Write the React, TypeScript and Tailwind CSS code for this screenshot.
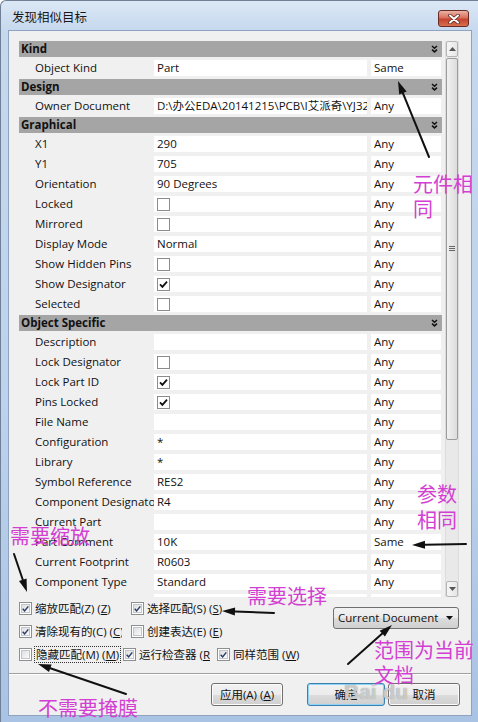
import React from 'react';

type GridRow =
  | { h: string }
  | { name: string; value?: string; check?: boolean; match?: string };

const rows: GridRow[] = [
  { h: 'Kind' },
  { name: 'Object Kind', value: 'Part', match: 'Same' },
  { h: 'Design' },
  { name: 'Owner Document', value: 'D:\\办公EDA\\20141215\\PCB\\I艾派奇\\YJ32A\\YJ32A.SchDoc', match: 'Any' },
  { h: 'Graphical' },
  { name: 'X1', value: '290' },
  { name: 'Y1', value: '705' },
  { name: 'Orientation', value: '90 Degrees' },
  { name: 'Locked', check: false },
  { name: 'Mirrored', check: false },
  { name: 'Display Mode', value: 'Normal' },
  { name: 'Show Hidden Pins', check: false },
  { name: 'Show Designator', check: true },
  { name: 'Selected', check: false },
  { h: 'Object Specific' },
  { name: 'Description', value: '' },
  { name: 'Lock Designator', check: false },
  { name: 'Lock Part ID', check: true },
  { name: 'Pins Locked', check: true },
  { name: 'File Name', value: '' },
  { name: 'Configuration', value: '*' },
  { name: 'Library', value: '*' },
  { name: 'Symbol Reference', value: 'RES2' },
  { name: 'Component Designator', value: 'R4' },
  { name: 'Current Part', value: '' },
  { name: 'Part Comment', value: '10K', match: 'Same' },
  { name: 'Current Footprint', value: 'R0603' },
  { name: 'Component Type', value: 'Standard' },
  { name: 'Database Table Name', value: '' },
];

const Chevrons = () => (
  <svg width="7" height="8" viewBox="0 0 7 8">
    <path d="M1 1 L3.5 3.3 L6 1 M1 4.6 L3.5 6.9 L6 4.6" fill="none" stroke="#111" strokeWidth="1.5" />
  </svg>
);

const GridCheck = ({ on }: { on: boolean }) => (
  <span className="w-[13px] h-[13px] border border-[#8c8c8c] bg-white flex items-center justify-center">
    {on && (
      <svg width="9" height="9" viewBox="0 0 9 9">
        <path d="M1 4.3 L3.4 6.8 L8 1.6" fill="none" stroke="#111" strokeWidth="1.8" />
      </svg>
    )}
  </span>
);

const WinCheck = ({ on }: { on: boolean }) => (
  <span className="w-[13px] h-[13px] shrink-0 border border-[#8e8f8f] bg-white p-[1px]">
    <span className="w-full h-full flex items-center justify-center border border-[#c2c6cc] bg-[linear-gradient(135deg,#dcdee2,#fbfbfb)]">
      {on && (
        <svg width="8" height="8" viewBox="0 0 8 8">
          <path d="M0.8 3.8 L3 6.2 L7.2 1" fill="none" stroke="#2a3d64" strokeWidth="1.7" />
        </svg>
      )}
    </span>
  </span>
);

const Opt = ({ on, w, lw, focus, children }: { on: boolean; w: string; lw: string; focus?: boolean; children: React.ReactNode }) => (
  <div className={`${w} flex items-center shrink-0`}>
    <WinCheck on={on} />
    <span className={`${lw} ml-[2px] overflow-hidden whitespace-nowrap`}>
      <span className={focus ? 'border border-dotted border-[#333] px-[1px]' : 'px-[1px]'}>{children}</span>
    </span>
  </div>
);

const WinButton = ({ w, primary, children }: { w: string; primary?: boolean; children: React.ReactNode }) => (
  <div
    className={`${w} h-[23px] rounded-[3px] border ${
      primary ? 'border-[#3c7fb1] shadow-[inset_0_0_0_1px_#8fd3f5]' : 'border-[#707070] shadow-[inset_0_0_0_1px_#fcfcfc]'
    } bg-[linear-gradient(180deg,#f2f2f2_0%,#ebebeb_50%,#dddddd_51%,#cfcfcf_100%)] flex items-center justify-center`}
  >
    {children}
  </div>
);

type Arrow = [number, number, number, number];
const arrows: Arrow[] = [
  [428, 156, 397, 80],
  [465, 543, 411, 544],
  [13, 553, 26, 591],
  [273, 612, 221, 610],
  [347, 663, 391, 624],
  [125, 693, 37, 663],
];

const ArrowShape = ({ a }: { a: Arrow }) => {
  const [x1, y1, x2, y2] = a;
  const dx = x2 - x1;
  const dy = y2 - y1;
  const len = Math.hypot(dx, dy);
  const ux = dx / len;
  const uy = dy / len;
  const hl = 13;
  const hw = 4;
  const bx = x2 - ux * hl;
  const by = y2 - uy * hl;
  const pts = `${x2},${y2} ${bx - uy * hw},${by + ux * hw} ${bx + uy * hw},${by - ux * hw}`;
  return (
    <g>
      <path d={`M${x1} ${y1} L${bx} ${by}`} stroke="#111" strokeWidth="2" strokeLinecap="round" />
      <polygon points={pts} fill="#111" />
    </g>
  );
};

const note = "absolute text-[20px] text-[#d23fd2] font-['Noto_Sans_CJK_SC',sans-serif] whitespace-nowrap";

export default function App() {
  return (
    <div className="w-[478px] h-[722px] relative overflow-hidden rounded-tl-[6px] border-l border-t border-[#6f7f95] bg-[linear-gradient(180deg,#dbe7f5_0px,#c6d8ee_30px,#bdd2ec_400px,#a9c3e4_100%)] text-[11.5px] text-[#111] font-['Segoe_UI','Open_Sans','Noto_Sans_CJK_SC',sans-serif]">
      {/* title bar */}
      <div className="h-[29px] flex items-center justify-between pt-[6px] pl-[11px] pr-[9px]">
        <span className="text-[12.5px] text-[#1a1a1a]">发现相似目标</span>
        <div className="w-[31px] h-[17px] rounded-[3px] border border-[#6b2b25] bg-[linear-gradient(180deg,#eab3a6_0%,#d9705c_45%,#c5422f_55%,#d7704f_100%)] flex items-center justify-center">
          <svg width="12" height="10" viewBox="0 0 12 10">
            <path d="M2 1.5 L10 8.5 M10 1.5 L2 8.5" stroke="#5a2a24" strokeWidth="3.6" strokeLinecap="round" />
            <path d="M2 1.5 L10 8.5 M10 1.5 L2 8.5" stroke="#fff" strokeWidth="2" strokeLinecap="round" />
          </svg>
        </div>
      </div>

      {/* client area */}
      <div className="ml-[7px] w-[464px] h-[686px] bg-[#f0f0f0] border border-[#8ea3bf] pt-[9px] pl-[10px] flex flex-col">
        {/* grid + scrollbar */}
        <div className="flex h-[557px]">
          <div className="w-[423px] h-[557px] overflow-hidden flex flex-col">
            {rows.map((r, i) =>
              'h' in r ? (
                <div key={i} className="h-[18px] shrink-0 py-[1px]">
                  <div className="h-full bg-[#a5a5a5] flex items-center justify-between pl-[2px] pr-[4px] font-bold">
                    <span>{r.h}</span>
                    <Chevrons />
                  </div>
                </div>
              ) : (
                <div key={i} className="h-[20px] shrink-0 flex items-center">
                  <div className="w-[135px] pl-[16px] overflow-hidden whitespace-nowrap">{r.name}</div>
                  <div className="w-[213px] h-[16px] bg-white flex items-center pl-[3px] overflow-hidden whitespace-nowrap">
                    {r.check !== undefined ? <GridCheck on={r.check} /> : r.value}
                  </div>
                  <div className="w-[70px] ml-[4px] h-[16px] bg-white flex items-center pl-[3px]">{r.match ?? 'Any'}</div>
                </div>
              )
            )}
          </div>
          {/* scrollbar */}
          <div className="w-[14px] ml-[3px] mt-[1px] h-[556px] flex flex-col bg-[#e9e9e9] border-x border-[#dcdcdc]">
            <div className="h-[16px] shrink-0 rounded-[2px] border border-[#b5b5b5] bg-[linear-gradient(90deg,#f6f6f6,#e6e6e6)] flex items-center justify-center">
              <svg width="7" height="4" viewBox="0 0 7 4"><path d="M0 4 L3.5 0 L7 4 Z" fill="#555" /></svg>
            </div>
            <div className="h-[382px] shrink-0 mt-[1px] rounded-[2px] border border-[#9c9c9c] bg-[linear-gradient(90deg,#f1f1f1,#dcdcdc)] flex items-center justify-center">
              <svg width="6" height="6" viewBox="0 0 6 6">
                <path d="M0 0.5 H6 M0 2.5 H6 M0 4.5 H6" stroke="#666" strokeWidth="1" />
              </svg>
            </div>
            <div className="flex-1" />
            <div className="h-[16px] shrink-0 rounded-[2px] border border-[#b5b5b5] bg-[linear-gradient(90deg,#f6f6f6,#e6e6e6)] flex items-center justify-center">
              <svg width="7" height="4" viewBox="0 0 7 4"><path d="M0 0 L3.5 4 L7 0 Z" fill="#555" /></svg>
            </div>
          </div>
        </div>

        {/* options */}
        <div className="flex">
          <div className="w-[314px] flex flex-col">
            <div className="h-[23px] flex items-center">
              <Opt on w="w-[112px]" lw="w-[96px]">缩放匹配(Z) (<u>Z</u>)</Opt>
              <Opt on w="w-[112px]" lw="w-[96px]">选择匹配(S) (<u>S</u>)</Opt>
            </div>
            <div className="h-[23px] flex items-center">
              <Opt on w="w-[112px]" lw="w-[88px]">清除现有的(C) (<u>C</u>)</Opt>
              <Opt on={false} w="w-[112px]" lw="w-[96px]">创建表达(E) (<u>E</u>)</Opt>
            </div>
            <div className="h-[23px] flex items-center">
              <Opt on={false} w="w-[104px]" lw="w-[88px]" focus>隐藏匹配(M) (<u>M</u>)</Opt>
              <Opt on w="w-[94px]" lw="w-[72px]">运行检查器 (<u>R</u>)</Opt>
              <Opt on w="w-[96px]" lw="w-[80px]">同样范围 (<u>W</u>)</Opt>
            </div>
          </div>
          <div className="mt-[10px] w-[126px] h-[22px] rounded-[3px] border border-[#707070] bg-[linear-gradient(180deg,#f2f2f2_0%,#ebebeb_50%,#dddddd_51%,#cfcfcf_100%)] flex items-center justify-between pl-[4px] pr-[5px]">
            <span>Current Document</span>
            <svg width="7" height="4" viewBox="0 0 7 4"><path d="M0 0 L3.5 4 L7 0 Z" fill="#111" /></svg>
          </div>
        </div>

        {/* separator */}
        <div className="mt-[7px] -ml-[10px] w-[462px] border-t border-[#a0a0a0] border-b border-b-white" />

        {/* buttons */}
        <div className="mt-[8px] flex pl-[192px]">
          <WinButton w="w-[72px]">应用(A) (<u>A</u>)</WinButton>
          <div className="w-[24px]" />
          <WinButton w="w-[78px]" primary>确定</WinButton>
          <div className="w-[3px]" />
          <WinButton w="w-[72px]">取消</WinButton>
        </div>
      </div>

      {/* annotations */}
      <svg className="absolute left-0 top-0 pointer-events-none" width="478" height="722" viewBox="0 0 478 722">
        {arrows.map((a, i) => (
          <ArrowShape key={i} a={a} />
        ))}
      </svg>
      <div className={`${note} left-[412px] top-[170px] leading-[25px]`}>元件相<br />同</div>
      <div className={`${note} left-[416px] top-[480px] leading-[26px]`}>参数<br />相同</div>
      <div className={`${note} left-[9px] top-[525px] leading-[20px]`}>需要缩放</div>
      <div className={`${note} left-[246px] top-[585px] leading-[20px]`}>需要选择</div>
      <div className={`${note} left-[373px] top-[636px] leading-[25px]`}>范围为当前<br />文档</div>
      <div className={`${note} left-[37px] top-[697px] leading-[20px]`}>不需要掩膜</div>
      <div className="absolute left-[343px] top-[680px] text-[21px] font-bold leading-none text-white/60 [text-shadow:0_0_1px_#777] font-['Liberation_Sans',sans-serif]">Bai du</div>
    </div>
  );
}
